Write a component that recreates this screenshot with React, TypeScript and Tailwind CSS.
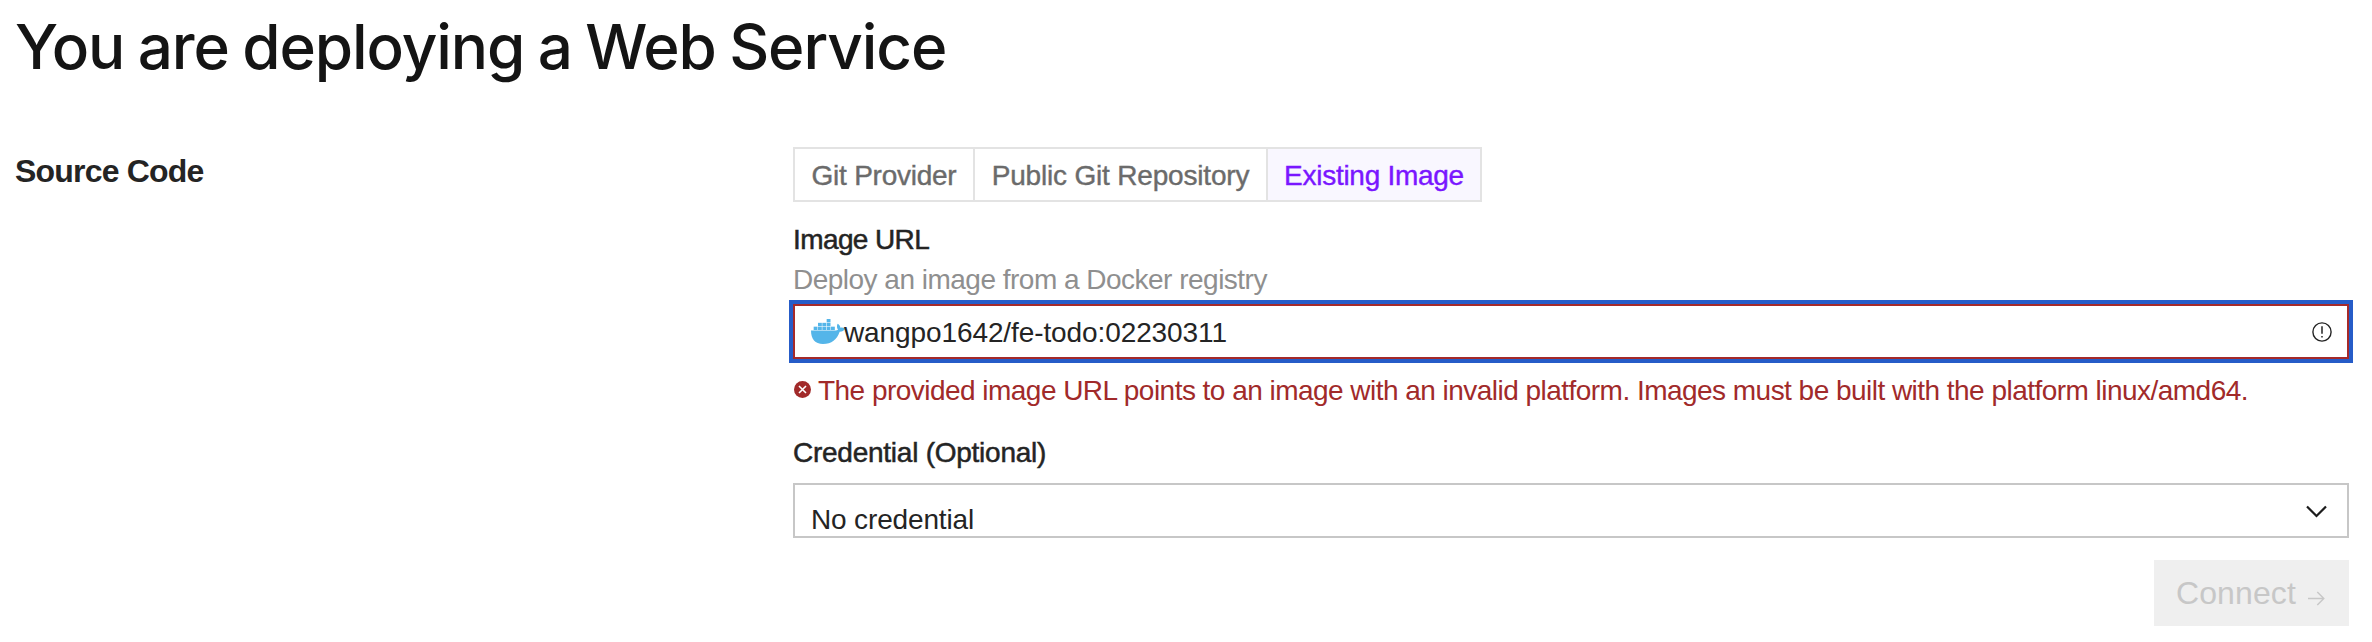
const tabs = [
  { label: "Git Provider", cls: "w-[180px] border-r-2 border-[#e3e3e3] text-[#6b6b6b] tracking-[-0.25px]" },
  { label: "Public Git Repository", cls: "w-[293px] border-r-2 border-[#e3e3e3] text-[#6b6b6b] tracking-[-0.18px]" },
  { label: "Existing Image", cls: "w-[212px] bg-[#f9f7ff] text-[#7a16ff] tracking-[-0.27px]" },
];

const containers = [
  [47, 0],
  [21, 11.5], [34, 11.5], [47, 11.5],
  [8, 23], [21, 23], [34, 23], [47, 23], [60, 23],
];

function DockerIcon() {
  return (
    <svg className="h-[25px] w-[34px] shrink-0" viewBox="0 0 102 75" fill="#54b5e9">
      {containers.map(([x, y]) => (
        <rect key={`${x}-${y}`} x={x} y={y} width="11.5" height="10" />
      ))}
      <path d="M0 34.5H72C76 34.5 80 33 81 32C77 26 77 19 80 14C85 17 88 21 88 26C93 25 98 26 102 29C99 35 94 38 86 38C78 61 62 75 36 75C12 75 0 60 0 34.5Z" />
    </svg>
  );
}

export default function App() {
  return (
    <main className="h-[642px] w-[2372px] overflow-hidden bg-white font-['Liberation_Sans',sans-serif] text-[28px] leading-[40px] text-[#242424]">
      <h1 className="h-[147px] whitespace-nowrap pl-[15px] pt-[7px] font-['Inter',sans-serif] text-[62px] font-[450] leading-[80px] tracking-[-1.1px] [word-spacing:-2px] text-[#141414]">
        You are deploying a Web Service
      </h1>
      <div className="flex">
        <h2 className="w-[793px] shrink-0 pl-[15px] pt-[4px] text-[32px] font-bold tracking-[-0.8px]">Source Code</h2>
        <section className="flex w-[1556px] shrink-0 flex-col">
          <div className="flex h-[55px] w-[689px] border-2 border-[#e3e3e3] [-webkit-text-stroke:0.4px]">
            {tabs.map((t) => (
              <button key={t.label} className={`flex shrink-0 items-center justify-center whitespace-nowrap pt-0.5 ${t.cls}`}>
                {t.label}
              </button>
            ))}
          </div>
          <label className="mt-[18px] tracking-[-0.6px] [-webkit-text-stroke:0.5px]">Image URL</label>
          <p className="tracking-[-0.51px] text-[#8f8f8f]">Deploy an image from a Docker registry</p>
          <div className="mt-[4px] flex h-[55px] items-center border-2 border-[#a52a2a] pl-4 pr-[15px] outline-4 outline-[#265cc8]">
            <DockerIcon />
            <span className="-ml-px grow pt-0.5 tracking-[-0.1px]">wangpo1642/fe-todo:02230311</span>
            <svg className="size-5" viewBox="0 0 20 20" fill="none" stroke="#242424">
              <circle cx="10" cy="10" r="9.1" strokeWidth="1.4" />
              <path d="M10 4.3v7.5M10 14v1.6" strokeWidth="1.5" />
            </svg>
          </div>
          <p className="mt-[12px] flex items-center whitespace-nowrap tracking-[-0.53px] text-[#a12a2a]">
            <svg className="mb-[3px] ml-px mr-[7px] size-[17px]" viewBox="0 0 17 17">
              <circle cx="8.5" cy="8.5" r="8.5" fill="currentColor" />
              <path d="M5 5l7 7M12 5l-7 7" stroke="white" strokeWidth="1.6" />
            </svg>
            The provided image URL points to an image with an invalid platform. Images must be built with the platform linux/amd64.
          </p>
          <label className="mt-[22px] tracking-[-0.25px] [-webkit-text-stroke:0.5px]">Credential (Optional)</label>
          <div className="mt-[10px] flex h-[55px] justify-between border-2 border-[#c7c7c7] pl-4 pr-5">
            <span className="pt-[15px] tracking-[-0.15px]">No credential</span>
            <svg className="mt-5 h-[14px] w-[21px]" viewBox="0 0 21 14" fill="none" stroke="#1c1c1c" strokeWidth="2.2">
              <path d="M1 1.5l9.5 9.5L20 1.5" />
            </svg>
          </div>
          <button className="mt-[22px] flex h-[66px] w-[195px] items-center self-end bg-[#efefef] pl-[22px] text-[32px] text-[#c7c7c7]">
            <span className="w-[132px] text-left tracking-[0.1px]">Connect</span>
            <svg className="mt-[10px] h-[15px] w-[17px]" viewBox="0 0 17 15" fill="none" stroke="currentColor" strokeWidth="1.4">
              <path d="M0 7.5h15.5M9.3 1l6.5 6.5L9.3 14" />
            </svg>
          </button>
        </section>
      </div>
    </main>
  );
}
